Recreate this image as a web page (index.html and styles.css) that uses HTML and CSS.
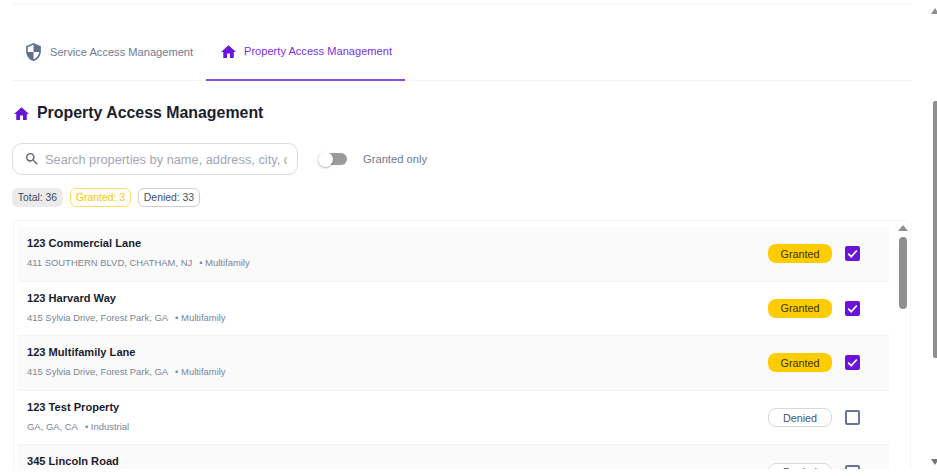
FILE: index.html
```html
<!DOCTYPE html>
<html lang="en">
<head>
<meta charset="utf-8">
<title>Property Access Management</title>
<link rel="stylesheet" href="styles.css">
</head>
<body>
<div class="frame">
  <main class="page">
    <div class="top-rule"></div>
    <nav class="tabs">
      <a class="tab tab-service">
        <svg class="shield-icon" viewBox="3 1 18 22"><path fill="#5f6f8f" d="M12 1L3 5v6c0 5.55 3.84 10.74 9 12 5.16-1.26 9-6.45 9-12V5l-9-4zm0 10.99h7c-.53 4.12-3.28 7.79-7 8.94V12H5V6.3l7-3.11v8.8z"/></svg>
        <span>Service Access Management</span>
      </a>
      <a class="tab active">
        <svg class="home-icon" viewBox="2 3 20 17"><path d="M10 20v-6h4v6h5v-8h3L12 3 2 12h3v8z"/></svg>
        <span>Property Access Management</span>
      </a>
    </nav>
    <h1 class="title">
      <svg class="home-icon" viewBox="2 3 20 17"><path d="M10 20v-6h4v6h5v-8h3L12 3 2 12h3v8z"/></svg>
      Property Access Management
    </h1>
    <div class="filters">
      <label class="search">
        <svg class="search-icon" viewBox="0 0 24 24"><path fill="#5b6270" d="M15.5 14h-.79l-.28-.27A6.471 6.471 0 0 0 16 9.5 6.5 6.5 0 1 0 9.5 16c1.61 0 3.09-.59 4.23-1.57l.27.28v.79l5 4.99L20.49 19l-4.99-5zm-6 0C7.01 14 5 11.99 5 9.5S7.01 5 9.5 5 14 7.01 14 9.5 11.99 14 9.5 14z"/></svg>
        <input class="search-input" type="text" placeholder="Search properties by name, address, city, or state">
      </label>
      <div class="toggle"><span class="knob"></span></div>
      <span class="toggle-label">Granted only</span>
    </div>
    <div class="chips">
      <span class="chip chip-total">Total: 36</span>
      <span class="chip chip-granted">Granted: 3</span>
      <span class="chip chip-denied">Denied: 33</span>
    </div>
    <section class="panel">
      <div class="rows">
        <article class="row shaded">
          <div class="info"><h2>123 Commercial Lane</h2><p><span>411 SOUTHERN BLVD, CHATHAM, NJ</span><span>• Multifamily</span></p></div>
          <span class="status granted">Granted</span>
          <span class="box checked"><svg viewBox="0 0 14 14"><path d="M3 7.2 5.8 10 11 4.2"/></svg></span>
        </article>
        <article class="row">
          <div class="info"><h2>123 Harvard Way</h2><p><span>415 Sylvia Drive, Forest Park, GA</span><span>• Multifamily</span></p></div>
          <span class="status granted">Granted</span>
          <span class="box checked"><svg viewBox="0 0 14 14"><path d="M3 7.2 5.8 10 11 4.2"/></svg></span>
        </article>
        <article class="row shaded">
          <div class="info"><h2>123 Multifamily Lane</h2><p><span>415 Sylvia Drive, Forest Park, GA</span><span>• Multifamily</span></p></div>
          <span class="status granted">Granted</span>
          <span class="box checked"><svg viewBox="0 0 14 14"><path d="M3 7.2 5.8 10 11 4.2"/></svg></span>
        </article>
        <article class="row">
          <div class="info"><h2>123 Test Property</h2><p><span>GA, GA, CA</span><span>• Industrial</span></p></div>
          <span class="status denied">Denied</span>
          <span class="box"></span>
        </article>
        <article class="row shaded">
          <div class="info"><h2>345 Lincoln Road</h2></div>
          <span class="status denied">Denied</span>
          <span class="box"></span>
        </article>
      </div>
      <div class="inner-bar">
        <span class="arrow-up"></span>
        <span class="inner-thumb"></span>
      </div>
    </section>
    <div class="page-bar">
      <span class="arrow-up small"></span>
      <span class="page-thumb"></span>
      <span class="arrow-down small"></span>
    </div>
  </main>
</div>
</body>
</html>
```
FILE: styles.css
```css
* { box-sizing: border-box; }
html, body { margin: 0; height: 100%; background: #fff; overflow: hidden; }
body { font-family: "Liberation Sans", Arial, sans-serif; color: #1a1d2e; }
.frame { height: 469px; overflow: hidden; }
.page { position: relative; height: 469px; padding: 3px 25px 0 12px; }
.top-rule { height: 2px; background: #f9fafc; }
.tabs { display: flex; height: 76px; border-bottom: 1px solid #f4f4f6; }
.tab { display: flex; align-items: center; gap: 8px; flex: none; height: 76px; padding: 30px 0 12px 15px; font-size: 11.1px; white-space: nowrap; color: #6f7a93; }
.tab-service { width: 194px; padding-left: 14px; gap: 9px; }
.tab.active { color: #7c2ee0; border-bottom: 2px solid #8a4be3; width: 199px; }
.shield-icon { width: 15px; height: 18px; flex: none; }
.home-icon { width: 15px; height: 13px; flex: none; fill: #6a14d9; }
.title { display: flex; align-items: center; gap: 8px; margin: 21px 0 0; padding-left: 2px; height: 22px; font-size: 15.9px; font-weight: 700; color: #1a1d2e; }
.filters { display: flex; align-items: center; margin-top: 19px; height: 32px; }
.search { display: flex; align-items: center; width: 286px; height: 32px; padding: 0 10px 0 11px; border: 1px solid #dcdcdc; border-radius: 10px; gap: 5px; }
.search-icon { width: 16px; height: 16px; flex: none; }
.search-input { flex: 1; min-width: 0; border: 0; outline: 0; padding: 0; background: none; font-family: "Liberation Sans", Arial, sans-serif; font-size: 12.8px; }
.search-input::placeholder { color: #a3a7b1; opacity: 1; }
.toggle { width: 29px; height: 12px; margin-left: 20px; background: #9b9b9b; border-radius: 6px; display: flex; align-items: center; }
.knob { width: 15px; height: 15px; flex: none; border-radius: 50%; background: #fff; box-shadow: 0 1px 2px rgba(0,0,0,.3); }
.toggle-label { margin-left: 16px; font-size: 11.2px; color: #6f7a8f; }
.chips { display: flex; gap: 7px; margin-top: 13px; height: 19px; }
.chip { display: flex; align-items: center; justify-content: center; height: 19px; border-radius: 6px; font-size: 10.4px; }
.chip-total { width: 51px; background: #ebebeb; color: #44495a; }
.chip-granted { width: 61px; border: 1px solid #ffdf66; color: #fcc800; }
.chip-denied { width: 62px; border: 1px solid #cfcfd2; color: #475068; }
.panel { display: flex; height: 260px; margin-top: 13px; margin-left: 1px; padding: 6px 0 0 4px; border: 1px solid #f5f5f6; border-bottom: 0; border-radius: 6px 6px 0 0; overflow: hidden; width: 898px; }
.rows { width: 871px; flex: none; }
.row { display: flex; align-items: center; height: 54.6px; padding: 0 29px 0 9px; border-bottom: 1px solid #f3f3f8; }
.row.shaded { background: #fafafa; }
.info { flex: 1; min-width: 0; align-self: flex-start; padding-top: 9px; }
.info h2 { margin: 0 0 7px; font-size: 11.1px; font-weight: 700; line-height: 14px; color: #1a1d2e; }
.info p { display: flex; gap: 7px; margin: 0; font-size: 9.45px; line-height: 12px; color: #7a8497; }
.status { display: flex; align-items: center; justify-content: center; width: 64px; height: 19px; border-radius: 8px; font-size: 10.8px; }
.status.granted { background: #ffcc00; color: #3a3300; }
.status.denied { background: #fff; border: 1px solid #d9d9dc; color: #4b5570; }
.box { width: 15px; height: 15px; margin-left: 13px; border: 2px solid #66759a; border-radius: 2px; flex: none; display: flex; }
.box.checked { background: #6a14d9; border: 0; }
.box svg { width: 15px; height: 15px; fill: none; stroke: #fff; stroke-width: 1.6; }
.inner-bar { display: flex; flex-direction: column; align-items: center; width: 9px; margin-left: 9px; margin-top: -2px; gap: 6px; }
.arrow-up { width: 0; height: 0; flex: none; border-left: 5px solid transparent; border-right: 5px solid transparent; border-bottom: 6px solid #8f8f8f; }
.inner-thumb { width: 8px; height: 72px; border-radius: 4px; background: #8f8f8f; flex: none; }
.page-bar { position: absolute; right: 0; top: 8px; width: 5px; height: 457px; display: flex; flex-direction: column; align-items: flex-end; }
.arrow-up.small { border-left-width: 4px; border-right-width: 4px; margin-right: -2px; }
.page-thumb { width: 4px; height: 257px; margin-top: 87px; background: #8f8f8f; border-radius: 2px 0 0 2px; }
.arrow-down { width: 0; height: 0; border-left: 4px solid transparent; border-right: 4px solid transparent; border-top: 6px solid #777; margin-top: auto; margin-right: -2px; }
```
